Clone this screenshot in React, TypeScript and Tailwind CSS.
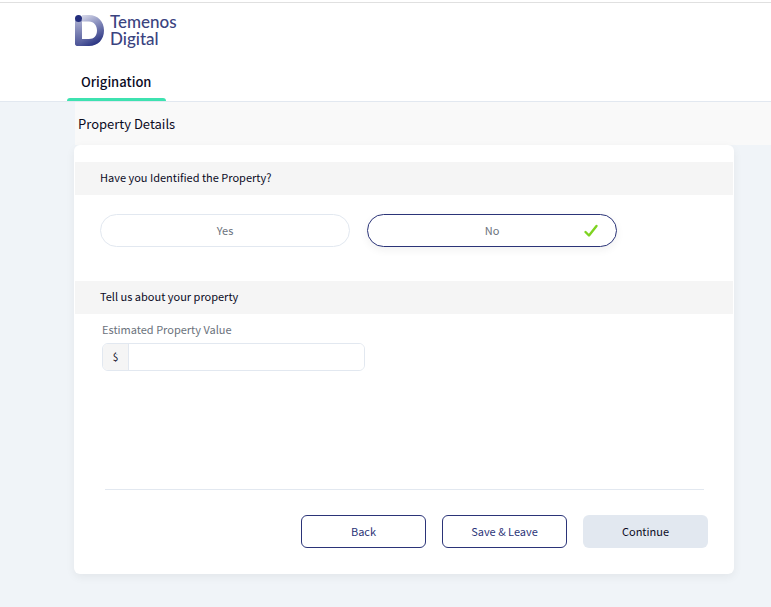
import { useState } from "react";
import type { ReactNode } from "react";

function Logo() {
  return (
    <div className="flex items-start gap-1.5 text-[#3a437f]">
      <svg className="mt-0.5" width="29" height="31" viewBox="0 0 29 31" aria-hidden="true">
        <defs>
          <linearGradient id="bowl" x1="0.1" y1="0" x2="0.6" y2="1">
            <stop offset="0" stopColor="#e6e7f2" />
            <stop offset="0.45" stopColor="#8d93c0" />
            <stop offset="1" stopColor="#2b3583" />
          </linearGradient>
          <linearGradient id="stem" x1="0" y1="0" x2="0" y2="1">
            <stop offset="0" stopColor="#a9adcf" />
            <stop offset="1" stopColor="#4a5296" />
          </linearGradient>
        </defs>
        <path
          d="M7 0H14C23 0 29 6.500 29 15.500S23 31 14 31H3Q0 31 0 28L7 24H14C19 24 22 20.500 22 15.500S19 6.500 14 6.500H7Z"
          fill="url(#bowl)"
        />
        <path d="M0 5H7V25L3 31Q0 31 0 28Z" fill="url(#stem)" />
        <circle cx="3.500" cy="3.500" r="3.500" fill="#232d7c" />
      </svg>
      <span className="font-['Lato',sans-serif] text-[17px] leading-[17px] font-medium">
        Temenos
        <br />
        Digital
      </span>
    </div>
  );
}

function SectionTitle({ children }: { children: ReactNode }) {
  return (
    <h2 className="mx-px bg-[#f5f5f5] px-[25px] pt-[7px] pb-[9px] text-[11px] leading-[17px] text-[#0b0b1f]">
      {children}
    </h2>
  );
}

function Choice({
  label,
  checked,
  onSelect,
}: {
  label: string;
  checked: boolean;
  onSelect: () => void;
}) {
  return (
    <label
      className={`grid h-[33px] w-[250px] cursor-pointer grid-cols-[1fr_auto_1fr] items-center rounded-full border bg-white px-4 text-[11px] text-[#6b727c] ${
        checked ? "border-[#2b3478] shadow-[0_3px_8px_rgba(0,0,0,0.06)]" : "border-[#e2e8f0]"
      }`}
    >
      <input
        type="radio"
        name="identified"
        checked={checked}
        onChange={onSelect}
        className="h-0 w-0 appearance-none"
      />
      <span>{label}</span>
      {checked && (
        <svg className="justify-self-end" width="18" height="16" viewBox="0 0 18 16" fill="none" aria-hidden="true">
          <path d="M3.500 9L7 12.500L14.500 3" stroke="#7ed321" strokeWidth="2.400" strokeLinecap="round" strokeLinejoin="round" />
        </svg>
      )}
    </label>
  );
}

export default function App() {
  const [identified, setIdentified] = useState("No");
  const [value, setValue] = useState("");
  return (
    <div className="min-h-screen bg-[#f0f4f8] font-['Noto_Sans_CJK_SC',sans-serif] text-[#0b0b1f]">
      <header className="border-b border-[#e2e8f0] bg-white pt-0.5">
        <div className="border-t border-[#e0e0e0] px-[67px] pt-2.5">
          <div className="ml-2">
            <Logo />
          </div>
          <nav className="mt-4 flex">
            <a href="#origination" className="flex flex-col text-[13px] leading-8 font-medium text-[#0b0b1f]">
              <span className="px-3.5 pt-[3px]">Origination</span>
              <span className="h-[3px] rounded-t bg-[#3de2b0]" />
            </a>
          </nav>
        </div>
      </header>
      <main>
        <h1 className="ml-[75px] bg-[#f9f9f9] px-[3px] py-[11px] text-[13px] leading-[21px]">
          Property Details
        </h1>
        <form
          onSubmit={(e) => e.preventDefault()}
          className="mr-[37px] ml-[74px] rounded-md bg-white pt-[17px] pb-[26px] shadow-[0_3px_10px_rgba(0,0,0,0.06)]"
        >
          <SectionTitle>Have you Identified the Property?</SectionTitle>
          <div className="flex gap-[17px] px-[26px] pt-[19px] pb-[34px]">
            <Choice label="Yes" checked={identified === "Yes"} onSelect={() => setIdentified("Yes")} />
            <Choice label="No" checked={identified === "No"} onSelect={() => setIdentified("No")} />
          </div>
          <SectionTitle>Tell us about your property</SectionTitle>
          <div className="px-7 pt-[7px]">
            <label htmlFor="property-value" className="block text-[11px] leading-[17px] text-[#6b727c]">
              Estimated Property Value
            </label>
            <div className="mt-[5px] flex h-7 w-[263px] overflow-hidden rounded-md border border-[#e2e8f0]">
              <span className="flex w-[26px] items-center justify-center border-r border-[#e2e8f0] bg-[#f5f5f5] pb-0.5 text-[10px]">
                $
              </span>
              <input
                id="property-value"
                type="text"
                value={value}
                onChange={(e) => setValue(e.target.value)}
                className="min-w-0 flex-1 bg-white px-2 text-[11px] outline-none"
              />
            </div>
          </div>
          <hr className="mt-[118px] mr-[30px] ml-[31px] border-[#e2e8f0]" />
          <div className="mt-[25px] flex justify-end gap-4 px-[26px] text-[11px]">
            <button type="button" className="h-[33px] w-[125px] rounded-md border border-[#2b3478] text-[#2b3478]">
              Back
            </button>
            <button type="button" className="h-[33px] w-[125px] rounded-md border border-[#2b3478] text-[#2b3478]">
              Save &amp; Leave
            </button>
            <button type="submit" className="h-[33px] w-[125px] rounded-md bg-[#e2e8f0]">
              Continue
            </button>
          </div>
        </form>
      </main>
    </div>
  );
}
